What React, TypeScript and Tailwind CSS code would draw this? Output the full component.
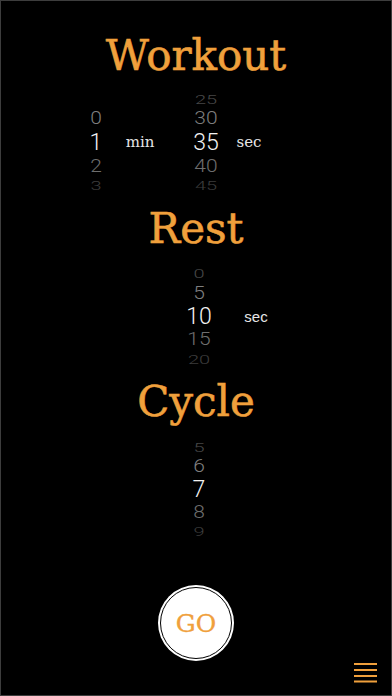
import React from "react";

type Row = { t: string; k: "far" | "near" | "sel" | "farb" | "nearb" };

const serif = "font-['DejaVu_Serif',serif]";
const sans = "font-['Liberation_Sans',Arial,sans-serif]";
const num = "font-['Roboto','Liberation_Sans',sans-serif] font-light";

const styles: Record<string, string> = {
  far: "text-[20px] text-[#474747] scale-y-[0.65]",
  near: "text-[21px] text-[#7e7e7e] scale-y-[0.85]",
  sel: "text-[23px] text-[#f2f2f2]",
  nearb: "text-[21px] text-[#6e6e6e] scale-y-[0.85]",
  farb: "text-[20px] text-[#3c3c3c] scale-y-[0.65]",
};

function Col({ rows, heights }: { rows: Row[]; heights: string[] }) {
  return (
    <div className={`w-[40px] flex flex-col ${num}`}>
      {rows.map((r, i) => (
        <div key={i} className={`${heights[i]} shrink-0 flex items-center justify-center leading-none`}>
          <span className={`block ${styles[r.k]}`}>{r.t}</span>
        </div>
      ))}
    </div>
  );
}

const mk = (a: string[]): Row[] => [
  { t: a[0], k: "far" },
  { t: a[1], k: "near" },
  { t: a[2], k: "sel" },
  { t: a[3], k: "nearb" },
  { t: a[4], k: "farb" },
];

export default function App() {
  const wH = ["h-[18px]", "h-[20px]", "h-[28px]", "h-[20px]", "h-[18px]"];
  const rH = ["h-[18px]", "h-[22px]", "h-[24px]", "h-[22px]", "h-[18px]"];
  const cH = ["h-[18px]", "h-[20px]", "h-[26px]", "h-[20px]", "h-[18px]"];
  const title = `text-[42px] leading-[42px] h-[42px] text-[#f0a03c] [-webkit-text-stroke:0.6px_#f0a03c] ${serif}`;
  return (
    <div className="w-full h-[696px] bg-black border border-[#3d3d3d] flex flex-col items-center overflow-hidden">
      <div className={`${title} mt-[34px]`}>Workout</div>
      <div className="mt-[13px] w-full h-[100px] overflow-hidden flex pl-[75px] shrink-0">
        <Col rows={mk(["", "0", "1", "2", "3"])} heights={wH} />
        <div className="w-[48px] flex flex-col">
          <div className="h-[38px] shrink-0" />
          <div className={`h-[28px] flex items-center justify-center text-[15px] leading-none text-[#e6e6e6] ${serif}`}>min</div>
        </div>
        <div className="ml-[22px]">
          <Col rows={mk(["25", "30", "35", "40", "45"])} heights={wH} />
        </div>
        <div className="w-[38px] ml-[4px] flex flex-col">
          <div className="h-[38px] shrink-0" />
          <div className={`h-[28px] flex items-center justify-center text-[15px] leading-none text-[#e6e6e6] ${serif}`}>sec</div>
        </div>
      </div>

      <div className={`${title} mt-[18px]`}>Rest</div>
      <div className="mt-[14px] w-full h-[101px] overflow-hidden flex pl-[178px] shrink-0">
        <Col rows={mk(["0", "5", "10", "15", "20"])} heights={rH} />
        <div className="w-[38px] ml-[18px] flex flex-col">
          <div className="h-[40px] shrink-0" />
          <div className={`h-[24px] flex items-center justify-center text-[15px] leading-none text-[#e6e6e6] ${sans}`}>sec</div>
        </div>
      </div>

      <div className={`${title} mt-[16px]`}>Cycle</div>
      <div className="mt-[15px] w-full h-[100px] overflow-hidden flex pl-[178px] shrink-0">
        <Col rows={mk(["5", "6", "7", "8", "9"])} heights={cH} />
      </div>

      <button className="mt-[47px] w-[76px] h-[76px] shrink-0 rounded-full bg-white p-[2px]">
        <div className={`w-full h-full rounded-full border border-black flex items-center justify-center text-[25px] leading-none text-[#f0a03c] [-webkit-text-stroke:0.3px_#f0a03c] ${serif}`}>
          GO
        </div>
      </button>

      <div className="w-full flex justify-end pr-[14px] mt-[2px]">
        <svg width="23" height="20" viewBox="0 0 23 20">
          <rect x="0" y="0" width="23" height="2" fill="#f0a03c" />
          <rect x="0" y="6" width="23" height="2" fill="#f0a03c" />
          <rect x="0" y="12" width="23" height="2" fill="#f0a03c" />
          <rect x="0" y="17.5" width="23" height="2" fill="#f0a03c" />
        </svg>
      </div>
    </div>
  );
}
